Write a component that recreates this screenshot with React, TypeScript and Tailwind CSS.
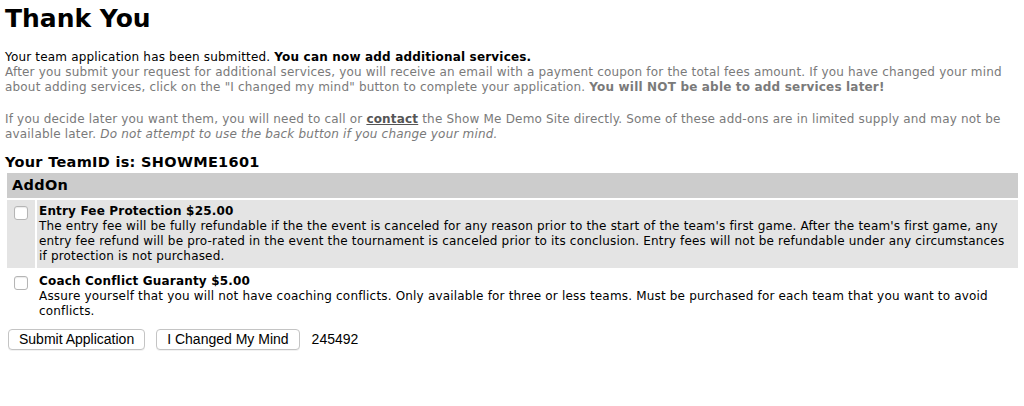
import React from "react";

type AddOn = {
  title: string;
  description: string;
};

const addOns: AddOn[] = [
  {
    title: "Entry Fee Protection $25.00",
    description:
      "The entry fee will be fully refundable if the the event is canceled for any reason prior to the start of the team's first game. After the team's first game, any entry fee refund will be pro-rated in the event the tournament is canceled prior to its conclusion. Entry fees will not be refundable under any circumstances if protection is not purchased.",
  },
  {
    title: "Coach Conflict Guaranty $5.00",
    description:
      "Assure yourself that you will not have coaching conflicts. Only available for three or less teams. Must be purchased for each team that you want to avoid conflicts.",
  },
];

export default function App() {
  return (
    <div className="min-h-[406px] bg-white px-[5px] text-[12px] leading-[15px] tracking-[0.18px] text-black [font-family:'DejaVu_Sans',Verdana,sans-serif]">
      <h1 className="pt-[2px] text-[25px] leading-[34px] font-bold tracking-normal">Thank You</h1>

      <div className="mt-[14px]">
        Your team application has been submitted.{" "}
        <b>You can now add additional services.</b>
      </div>
      <div className="text-[#7a7a7a]">
        After you submit your request for additional services, you will receive an email with a payment coupon for the total
        fees amount. If you have changed your mind about adding services, click on the "I changed my mind" button to complete
        your application. <b>You will NOT be able to add services later!</b>
      </div>
      <div className="mt-[17px] text-[#7a7a7a]">
        If you decide later you want them, you will need to call or{" "}
        <a href="#" className="font-bold text-[#555] underline">
          contact
        </a>{" "}
        the Show Me Demo Site directly. Some of these add-ons are in limited supply and may not be available later.{" "}
        <i>Do not attempt to use the back button if you change your mind.</i>
      </div>

      <div className="mt-[12px] text-[14.5px] leading-[17px] font-bold tracking-[0.3px]">Your TeamID is: SHOWME1601</div>

      <div className="mt-[2px] mr-[1px] ml-[2px] flex flex-col gap-[2px]">
        <div className="flex h-[25px] items-center bg-[#cccccc] px-[5px] text-[14.5px] font-bold tracking-[0.3px]">AddOn</div>
        {addOns.map((item, i) => (
          <div key={i} className="flex gap-[2px]">
            <div className={`w-[28px] shrink-0 pt-[6px] pl-[7px] ${i === 0 ? "bg-[#e4e4e4]" : ""}`}>
              <input
                type="checkbox"
                className="h-[14px] w-[14px] appearance-none rounded-[3px] border border-[#b5b5b5] bg-white shadow-[inset_0_1px_1px_rgba(0,0,0,0.08)]"
              />
            </div>
            <div className={`flex-1 pt-[4px] pr-[4px] pb-[4px] pl-[2px] ${i === 0 ? "bg-[#e4e4e4]" : ""}`}>
              <div className="font-bold">{item.title}</div>
              <div>{item.description}</div>
            </div>
          </div>
        ))}
      </div>

      <div className="mt-[6px] flex items-center gap-[11px] pl-[3px] text-[14px] tracking-normal [font-family:'Liberation_Sans',Arial,sans-serif]">
        <button className="h-[21px] rounded-[4px] border border-[#c4c4c4] bg-white px-[10px] leading-[19px] shadow-[0_1px_0_rgba(0,0,0,0.05)]">
          Submit Application
        </button>
        <button className="h-[21px] rounded-[4px] border border-[#c4c4c4] bg-white px-[10px] leading-[19px] shadow-[0_1px_0_rgba(0,0,0,0.05)]">
          I Changed My Mind
        </button>
        <span className="ml-[1px]">245492</span>
      </div>
    </div>
  );
}
